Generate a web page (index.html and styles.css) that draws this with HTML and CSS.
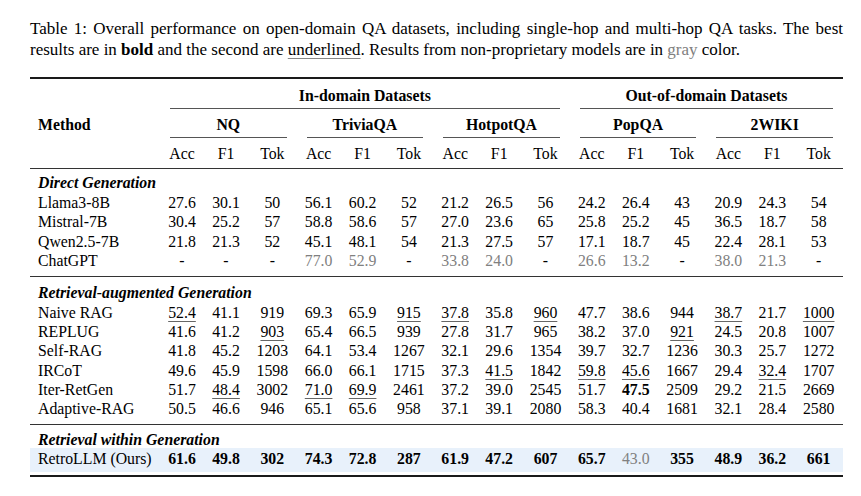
FILE: index.html
```html
<!DOCTYPE html>
<html>
<head>
<meta charset="utf-8">
<link rel="stylesheet" href="styles.css">
</head>
<body>
<div class="page">
  <p class="caption">Table 1: Overall performance on open-domain QA datasets, including single-hop and multi-hop QA tasks. The best results are in <b>bold</b> and the second are <span class="ul">underlined</span>. Results from non-proprietary models are in <span class="g">gray</span> color.</p>

  <div class="tbl">
    <div class="rule-top"></div>

    <div class="row h1">
      <span class="m"></span>
      <span class="span-in">In-domain Datasets</span>
      <span class="span-out">Out-of-domain Datasets</span>
    </div>
    <div class="row cmid c1">
      <span class="m"></span>
      <i class="cr span-in"></i>
      <i class="cr span-out"></i>
    </div>

    <div class="row h2">
      <span class="m mh">Method</span>
      <span class="grp">NQ</span>
      <span class="grp">TriviaQA</span>
      <span class="grp">HotpotQA</span>
      <span class="grp">PopQA</span>
      <span class="grp">2WIKI</span>
    </div>
    <div class="row cmid c2">
      <span class="m"></span>
      <i class="cr grp"></i><i class="cr grp"></i><i class="cr grp"></i><i class="cr grp"></i><i class="cr grp"></i>
    </div>

    <div class="row h3">
      <span class="m"></span>
      <span>Acc</span><span>F1</span><span>Tok</span>
      <span>Acc</span><span>F1</span><span>Tok</span>
      <span>Acc</span><span>F1</span><span>Tok</span>
      <span>Acc</span><span>F1</span><span>Tok</span>
      <span>Acc</span><span>F1</span><span>Tok</span>
    </div>
    <div class="rule-mid r1"></div>

    <div class="sec s1">Direct Generation</div>
    <div class="row"><span class="m">Llama3-8B</span><span>27.6</span><span>30.1</span><span>50</span><span>56.1</span><span>60.2</span><span>52</span><span>21.2</span><span>26.5</span><span>56</span><span>24.2</span><span>26.4</span><span>43</span><span>20.9</span><span>24.3</span><span>54</span></div>
    <div class="row"><span class="m">Mistral-7B</span><span>30.4</span><span>25.2</span><span>57</span><span>58.8</span><span>58.6</span><span>57</span><span>27.0</span><span>23.6</span><span>65</span><span>25.8</span><span>25.2</span><span>45</span><span>36.5</span><span>18.7</span><span>58</span></div>
    <div class="row"><span class="m">Qwen2.5-7B</span><span>21.8</span><span>21.3</span><span>52</span><span>45.1</span><span>48.1</span><span>54</span><span>21.3</span><span>27.5</span><span>57</span><span>17.1</span><span>18.7</span><span>45</span><span>22.4</span><span>28.1</span><span>53</span></div>
    <div class="row"><span class="m">ChatGPT</span><span>-</span><span>-</span><span>-</span><span class="g">77.0</span><span class="g">52.9</span><span>-</span><span class="g">33.8</span><span class="g">24.0</span><span>-</span><span class="g">26.6</span><span class="g">13.2</span><span>-</span><span class="g">38.0</span><span class="g">21.3</span><span>-</span></div>
    <div class="rule-mid r2"></div>

    <div class="sec s2">Retrieval-augmented Generation</div>
    <div class="row"><span class="m">Naive RAG</span><span><u>52.4</u></span><span>41.1</span><span>919</span><span>69.3</span><span>65.9</span><span><u>915</u></span><span><u>37.8</u></span><span>35.8</span><span><u>960</u></span><span>47.7</span><span>38.6</span><span>944</span><span><u>38.7</u></span><span>21.7</span><span><u>1000</u></span></div>
    <div class="row"><span class="m">REPLUG</span><span>41.6</span><span>41.2</span><span><u>903</u></span><span>65.4</span><span>66.5</span><span>939</span><span>27.8</span><span>31.7</span><span>965</span><span>38.2</span><span>37.0</span><span><u>921</u></span><span>24.5</span><span>20.8</span><span>1007</span></div>
    <div class="row"><span class="m">Self-RAG</span><span>41.8</span><span>45.2</span><span>1203</span><span>64.1</span><span>53.4</span><span>1267</span><span>32.1</span><span>29.6</span><span>1354</span><span>39.7</span><span>32.7</span><span>1236</span><span>30.3</span><span>25.7</span><span>1272</span></div>
    <div class="row"><span class="m">IRCoT</span><span>49.6</span><span>45.9</span><span>1598</span><span>66.0</span><span>66.1</span><span>1715</span><span>37.3</span><span><u>41.5</u></span><span>1842</span><span><u>59.8</u></span><span><u>45.6</u></span><span>1667</span><span>29.4</span><span><u>32.4</u></span><span>1707</span></div>
    <div class="row"><span class="m">Iter-RetGen</span><span>51.7</span><span><u>48.4</u></span><span>3002</span><span><u>71.0</u></span><span><u>69.9</u></span><span>2461</span><span>37.2</span><span>39.0</span><span>2545</span><span>51.7</span><span><b>47.5</b></span><span>2509</span><span>29.2</span><span>21.5</span><span>2669</span></div>
    <div class="row"><span class="m">Adaptive-RAG</span><span>50.5</span><span>46.6</span><span>946</span><span>65.1</span><span>65.6</span><span>958</span><span>37.1</span><span>39.1</span><span>2080</span><span>58.3</span><span>40.4</span><span>1681</span><span>32.1</span><span>28.4</span><span>2580</span></div>
    <div class="rule-mid r3"></div>

    <div class="sec s3">Retrieval within Generation</div>
    <div class="row ours"><span class="m">RetroLLM (Ours)</span><b>61.6</b><b>49.8</b><b>302</b><b>74.3</b><b>72.8</b><b>287</b><b>61.9</b><b>47.2</b><b>607</b><b>65.7</b><span class="g">43.0</span><b>355</b><b>48.9</b><b>36.2</b><b>661</b></div>
    <div class="rule-bot"></div>
  </div>
</div>
</body>
</html>
```

FILE: styles.css
```css
html, body {
  margin: 0;
  padding: 0;
  background: #ffffff;
}

.page {
  width: 813px;
  padding: 18px 0 0 30px;
  font-family: "Liberation Serif", "Times New Roman", serif;
  color: #000;
}

.caption {
  margin: 0;
  font-size: 17px;
  line-height: 21px;
  text-align: justify;
}

.ul {
  text-decoration: underline;
  text-decoration-color: #888;
  text-decoration-thickness: 1px;
  text-underline-offset: 3px;
}

.g {
  color: #808080;
}

.tbl {
  margin-top: 17px;
  font-size: 15.8px;
  line-height: 19.3px;
}

.rule-top {
  height: 2px;
  background: #1a1a1a;
}

.rule-mid {
  height: 1px;
  background: #333;
}

.rule-bot {
  height: 2px;
  background: #1a1a1a;
  margin-top: 3px;
}

.row {
  display: grid;
  grid-template-columns: 130px repeat(5, 44px 44px 48.6px);
  text-align: center;
}

.row .m {
  text-align: left;
  padding-left: 8px;
}

.row u {
  text-decoration: underline;
  text-decoration-color: #666;
  text-decoration-thickness: 1px;
  text-underline-offset: 3px;
}

.h1, .h2 {
  font-weight: bold;
}

.h1 { padding-top: 6.5px; }
.h2 { padding-top: 6px; }
.h3 { padding-top: 6px; }

.span-in { grid-column: 2 / 11; }
.span-out { grid-column: 11 / 17; }
.grp { grid-column: span 3; }

.mh {
  font-weight: bold;
}

.cmid {
  height: 1px;
}

.c1 { margin-top: 3.5px; }
.c2 { margin-top: 2px; }

.cr {
  display: block;
  height: 1px;
  background: #555;
  margin: 0 10px;
}

.r1 { margin-top: 5px; }
.r2 { margin-top: 6px; }
.r3 { margin-top: 6px; }

.sec {
  font-weight: bold;
  font-style: italic;
  padding-left: 8px;
}

.s1 { padding-top: 4px; padding-bottom: 1px; }
.s2 { padding-top: 6px; }
.s3 { padding-top: 5px; }

.ours {
  background: #e8f1fb;
  margin-top: -1.5px;
  padding: 1px 0 3px;
}
```
